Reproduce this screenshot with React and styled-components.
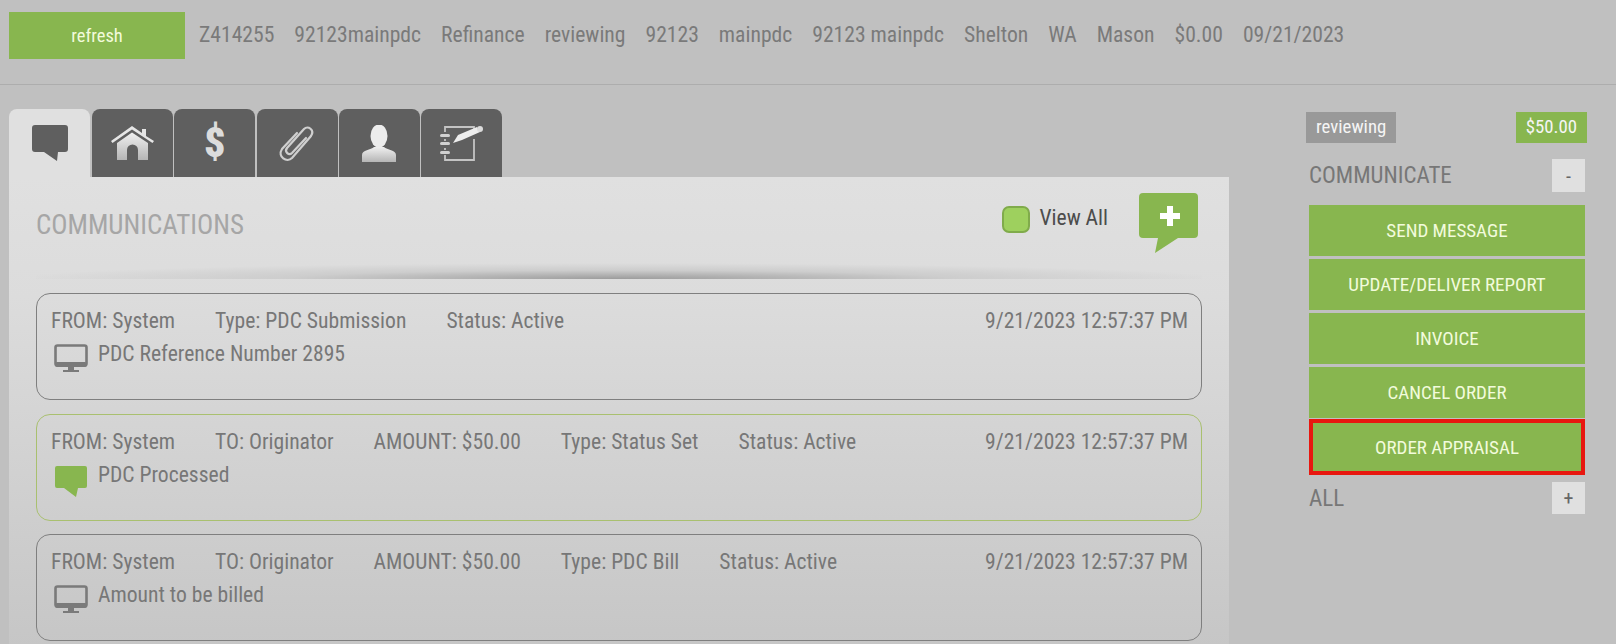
import React from "react";
import styled, { createGlobalStyle } from "styled-components";

const Global = createGlobalStyle`
  html, body { margin: 0; padding: 0; background: #c0c0c0; height: 644px; overflow: hidden; }
  body { font-family: Roboto, "Liberation Sans", sans-serif; font-stretch: 75%; }
  * { box-sizing: border-box; }
`;
const Page = styled.div`width: 1616px; height: 644px; overflow: hidden; background: #c0c0c0; color: #7a7a7a;`;
const TopBar = styled.header`
  height: 85px; border-bottom: 1px solid #adadad; padding: 12px 0 0 9px; display: flex; align-items: flex-start;
`;
const Refresh = styled.button`
  width: 176px; height: 47px; border: 0; background: #88b64f; color: #f2fbdc; font: 400 18.5px Roboto, sans-serif;
  font-stretch: 75%; padding: 0; margin-right: 14px;
`;
const Crumbs = styled.div`display: flex; gap: 20px; font-size: 21.62px; height: 44px; align-items: center;`;
const Crumb = styled.span`white-space: nowrap;`;
const Main = styled.main`display: flex; padding: 24px 31px 0 9px; justify-content: space-between;`;
const Left = styled.section`width: 1220px;`;
const Tabs = styled.nav`display: flex; gap: 1.3px; height: 68px;`;
const Tab = styled.div`
  width: 81px; height: 68px; border-radius: 8px 8px 0 0; background: ${p => (p.$active ? "#e0e0e0" : "#5f5f5f")};
  margin-right: ${p => (p.$active ? "0.7px" : "0")};
  display: flex; align-items: center; justify-content: center;
`;
const DollarGlyph = styled.span`
  font-size: 42px; font-weight: 900; line-height: 46px; height: 46px; color: #dcdcdc;
`;
const Panel = styled.div`
  height: 470px; padding: 0 27px; background: linear-gradient(#e0e0e0 0, #dcdcdc 120px, #c6c6c6 470px);
`;
const PanelHead = styled.div`height: 102px; margin-bottom: 14px; position: relative; display: flex; align-items: flex-start;
  &::after { content: ""; position: absolute; left: 0; right: 0; bottom: 0; height: 16px;
    background: radial-gradient(ellipse 52% 100% at 50% 100%, #9c9c9c 0, #cdcdcd 55%, transparent 100%); }
`;
const Title = styled.h2`margin: 33px 0 0; font-weight: 400; font-size: 27px; line-height: 30px; color: #a6a6a6; flex: 1;`;
const ViewAll = styled.label`display: flex; align-items: flex-start; gap: 9px; font-size: 21.6px; line-height: 24px; color: #4c4c4c; margin: 29px 31px 0 0; height: 28px;`;
const Check = styled.span`width: 28px; height: 27px; border-radius: 7px; background: #9ed05e; border: 2px solid #80ab4b; display: block;`;
const AddIcon = styled.svg`width: 59px; height: 60px; margin: 16px 4px 0 0; display: block;`;
const Card = styled.article`
  height: 107px; margin-bottom: 13.6px; border: 1px solid ${p => (p.$green ? "#a9c06f" : "#7f7f7f")}; border-radius: 14px; padding: 14px 13px 0 14px;
`;
const Meta = styled.div`display: flex; font-size: 21.62px; line-height: 25px; gap: 40px; color: #777;`;
const Stamp = styled.span`margin-left: auto;`;
const Body = styled.div`display: flex; font-size: 21.62px; line-height: 25px; margin-top: 8px; color: #777; padding-left: 3px; gap: 10px;`;
const MsgIcon = styled.svg`width: 34px; height: 34px; margin-top: 1px; flex: none; display: block;`;
const Right = styled.aside`width: 276px; margin-top: 3px;`;
const Badges = styled.div`display: flex; justify-content: space-between; margin: 0 -2px 0 -3px; height: 31px;`;
const Badge = styled.span`
  background: ${p => (p.$green ? "#88b64f" : "#999")}; color: #f5f5f5; font-size: 18.8px; font-weight: 400; height: 31px; line-height: 31px; padding: 0 10px;
`;
const SectionHead = styled.div`display: flex; justify-content: space-between; align-items: center; margin: ${p => p.$m || "16px 0 13px"}; font-size: 23px; color: #777;`;
const Toggle = styled.span`width: 33px; height: ${p => p.$h || 33}px; background: #e0e0e0; display: flex; align-items: center; justify-content: center; font-size: 20px; color: #666;`;
const Action = styled.button`
  display: block; width: 100%; height: ${p => (p.$flag ? 56 : 51)}px; margin: ${p => (p.$flag ? "-2px 0 0" : "0 0 3px")};
  border: ${p => (p.$flag ? "4px solid #e8170f" : "0")}; background: #88b64f;
  color: #f2fbdc; font: 400 19px Roboto, sans-serif; font-stretch: 75%; padding: 0;
`;

const Bubble = ({ fill = "#5f5f5f" }) => (
  <svg width="36" height="37" viewBox="0 0 36 37"><path d="M3 0h30a3 3 0 0 1 3 3v21a3 3 0 0 1-3 3h-7l-1 9-13-9H3a3 3 0 0 1-3-3V3a3 3 0 0 1 3-3z" fill={fill} /></svg>
);
const grad = (id) => (
  <defs><linearGradient id={id} x1="0" y1="0" x2="0" y2="1"><stop offset="0" stopColor="#f0f0f0" /><stop offset="1" stopColor="#b5b5b5" /></linearGradient></defs>
);
const Home = () => (
  <svg width="43" height="34" viewBox="0 0 43 34">{grad("hg")}<path d="M0 15 21 0l10 7V3h4v7l8 5-1.5 2L21 3.5 1.5 17z" fill="#e6e6e6" /><path d="M6 17 21 6.5 37 17v17H27V24a5.5 5.5 0 0 0-11 0v10H6z" fill="url(#hg)" /></svg>
);
const Clip = () => (
  <svg width="37" height="39" viewBox="0 0 37 39"><path d="M27 14 13 29c-3 3-8-1-5-5L25 5c4-4 11 1 7 7L13 34c-5 5-15-1-10-9L18 9" fill="none" stroke="#cfcfcf" strokeWidth="2.2" strokeLinecap="round" /></svg>
);
const Person = () => (
  <svg width="34" height="37" viewBox="0 0 34 37">{grad("pg")}<ellipse cx="17" cy="11" rx="8.5" ry="11.5" fill="#ededed" /><path d="M0 37v-7c0-5 9-5 12-8h10c3 3 12 3 12 8v7z" fill="url(#pg)" /></svg>
);
const Notebook = () => (
  <svg width="43" height="37" viewBox="0 0 43 37"><path d="M5 7V2h29v4M34 14v21H5v-5M5 25v-2M5 16v-2" fill="none" stroke="#c4c4c4" strokeWidth="1.8" /><g fill="#d0d0d0"><rect x="0" y="9" width="10" height="3" rx="1.5" /><rect x="0" y="17" width="10" height="3" rx="1.5" /><rect x="0" y="26" width="10" height="3" rx="1.5" /></g><path d="m13 18 5-8 19-8 3 5-18 8z" fill="#ededed" /><circle cx="40" cy="4" r="3" fill="#dcdcdc" /></svg>
);
const Monitor = () => (
  <MsgIcon viewBox="0 0 34 34"><rect x="1.5" y="3.5" width="31" height="20" rx="2" fill="none" stroke="#7a7a7a" strokeWidth="2.6" /><rect x="1" y="20" width="32" height="5" rx="2" fill="#7a7a7a" /><path d="M14 25h6v3h-6zM9 28h16v2H9z" fill="#7a7a7a" /></MsgIcon>
);
const GreenMsg = () => (
  <MsgIcon viewBox="0 0 34 34"><path d="M3 3h28a2 2 0 0 1 2 2v18a2 2 0 0 1-2 2h-7l-2 9-12-9H3a2 2 0 0 1-2-2V5a2 2 0 0 1 2-2z" fill="#88b64f" /></MsgIcon>
);

const crumbs = ["Z414255", "92123mainpdc", "Refinance", "reviewing", "92123", "mainpdc", "92123 mainpdc", "Shelton", "WA", "Mason", "$0.00", "09/21/2023"];
const cards = [
  { meta: ["FROM: System", "Type: PDC Submission", "Status: Active"], body: "PDC Reference Number 2895", icon: <Monitor /> },
  { green: true, meta: ["FROM: System", "TO: Originator", "AMOUNT: $50.00", "Type: Status Set", "Status: Active"], body: "PDC Processed", icon: <GreenMsg /> },
  { meta: ["FROM: System", "TO: Originator", "AMOUNT: $50.00", "Type: PDC Bill", "Status: Active"], body: "Amount to be billed", icon: <Monitor /> },
];
const actions = ["SEND MESSAGE", "UPDATE/DELIVER REPORT", "INVOICE", "CANCEL ORDER", "ORDER APPRAISAL"];

export default function App() {
  return (
    <Page>
      <Global />
      <TopBar>
        <Refresh>refresh</Refresh>
        <Crumbs>{crumbs.map(c => <Crumb key={c}>{c}</Crumb>)}</Crumbs>
      </TopBar>
      <Main>
        <Left>
          <Tabs>
            <Tab $active><Bubble /></Tab>
            <Tab><Home /></Tab>
            <Tab><DollarGlyph>$</DollarGlyph></Tab>
            <Tab><Clip /></Tab>
            <Tab><Person /></Tab>
            <Tab><Notebook /></Tab>
          </Tabs>
          <Panel>
            <PanelHead>
              <Title>COMMUNICATIONS</Title>
              <ViewAll><Check />View All</ViewAll>
              <AddIcon viewBox="0 0 59 60"><path d="M4 0h51a4 4 0 0 1 4 4v37a4 4 0 0 1-4 4H39L16 60l3-15H4a4 4 0 0 1-4-4V4a4 4 0 0 1 4-4z" fill="#88b64f" /><path d="M28 13h6v7h7v6h-7v7h-6v-7h-7v-6h7z" fill="#fff" /></AddIcon>
            </PanelHead>
            {cards.map((c, i) => (
              <Card key={i} $green={c.green}>
                <Meta>{c.meta.map(m => <span key={m}>{m}</span>)}<Stamp>9/21/2023 12:57:37 PM</Stamp></Meta>
                <Body>{c.icon}{c.body}</Body>
              </Card>
            ))}
          </Panel>
        </Left>
        <Right>
          <Badges><Badge>reviewing</Badge><Badge $green>$50.00</Badge></Badges>
          <SectionHead>COMMUNICATE<Toggle>-</Toggle></SectionHead>
          {actions.map(a => <Action key={a} $flag={a === "ORDER APPRAISAL"}>{a}</Action>)}
          <SectionHead $m="7px 0 0">ALL<Toggle $h={32}>+</Toggle></SectionHead>
        </Right>
      </Main>
    </Page>
  );
}
